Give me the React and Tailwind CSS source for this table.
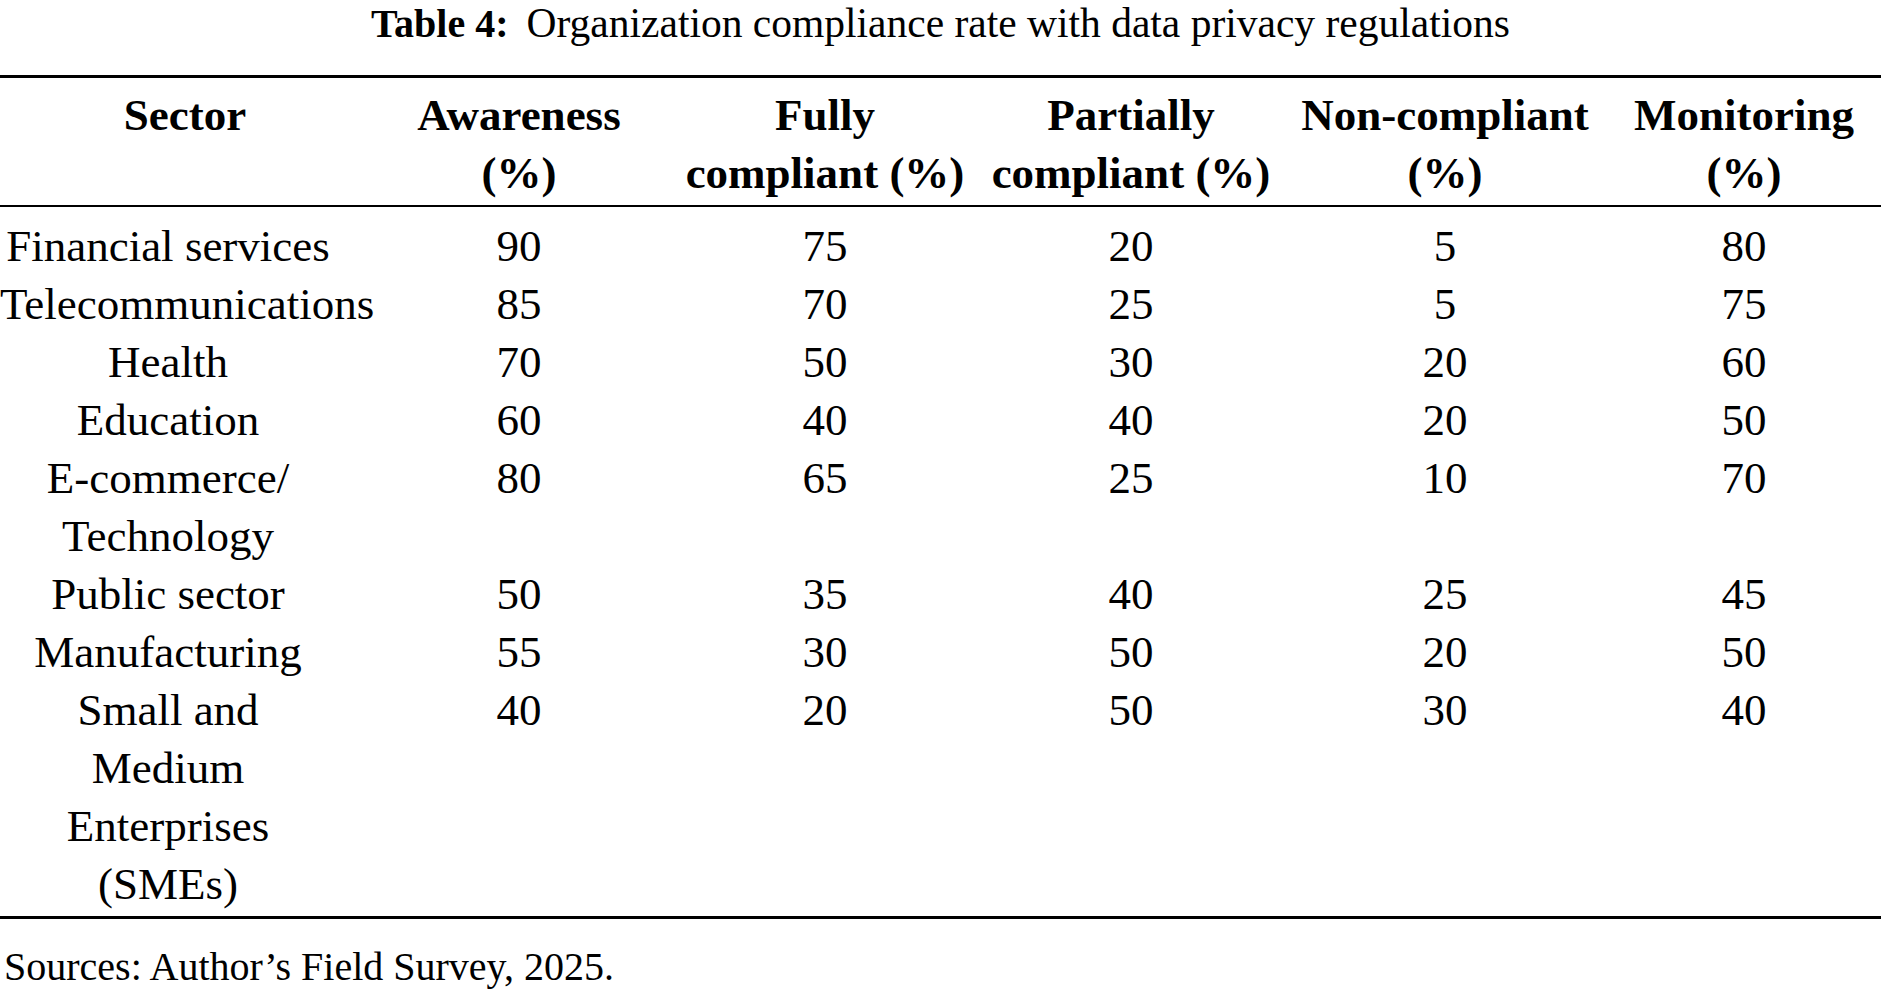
import React from 'react';

const headers = [
	['Sector'],
	['Awareness', '(%)'],
	['Fully', 'compliant (%)'],
	['Partially', 'compliant (%)'],
	['Non-compliant', '(%)'],
	['Monitoring', '(%)'],
];

const rows = [
	{ sector: ['Financial services'], values: [90, 75, 20, 5, 80] },
	{ sector: ['Telecommunications'], values: [85, 70, 25, 5, 75] },
	{ sector: ['Health'], values: [70, 50, 30, 20, 60] },
	{ sector: ['Education'], values: [60, 40, 40, 20, 50] },
	{ sector: ['E-commerce/', 'Technology'], values: [80, 65, 25, 10, 70] },
	{ sector: ['Public sector'], values: [50, 35, 40, 25, 45] },
	{ sector: ['Manufacturing'], values: [55, 30, 50, 20, 50] },
	{ sector: ['Small and', 'Medium', 'Enterprises', '(SMEs)'], values: [40, 20, 50, 30, 40] },
];

// padding per column so each one lines up with the reference centres
const colPad = ['pr-[30px]', '', '', '', 'pl-[16px]', 'pl-[17px]'];

const Lines = ({ lines }) =>
	lines.map((line, i) => (
		<div key={i} className="whitespace-nowrap">
			{line}
		</div>
	));

const App = () => {
	return (
		<div
			className="w-[1881px] h-[996px] bg-white text-black overflow-hidden"
			style={{ fontFamily: '"Liberation Serif", "Times New Roman", serif' }}
		>
			<div className="text-center text-[41.5px] leading-[46px]">
				<span className="font-bold text-[40px]">Table 4:</span>
				<span className="ml-[18px]">Organization compliance rate with data privacy regulations</span>
			</div>

			<div className="mt-[28px] h-[3px] bg-black" />

			{/* header */}
			<div className="grid grid-cols-[366px_306px_306px_306px_306px_291px] pt-[8px] pb-[3px] text-[45px] leading-[58px] font-bold text-center">
				{headers.map((h, i) => (
					<div key={i} className={i === 0 ? 'pl-[34px] pr-[30px]' : colPad[i]}>
						<Lines lines={h} />
					</div>
				))}
			</div>

			<div className="h-[2px] bg-black" />

			{/* body */}
			<div className="pt-[10px] pb-[3px] text-[45px] leading-[58px] text-center">
				{rows.map((row, r) => (
					<div key={r} className="grid grid-cols-[366px_306px_306px_306px_306px_291px] items-start">
						<div className={colPad[0]}>
							<Lines lines={row.sector} />
						</div>
						{row.values.map((v, i) => (
							<div key={i} className={colPad[i + 1]}>
								{v}
							</div>
						))}
					</div>
				))}
			</div>

			<div className="h-[3px] bg-black" />

			<div className="mt-[28px] pl-[4px] text-[40px] leading-[40px]">
				Sources: Author’s Field Survey, 2025.
			</div>
		</div>
	);
};

export default App;
